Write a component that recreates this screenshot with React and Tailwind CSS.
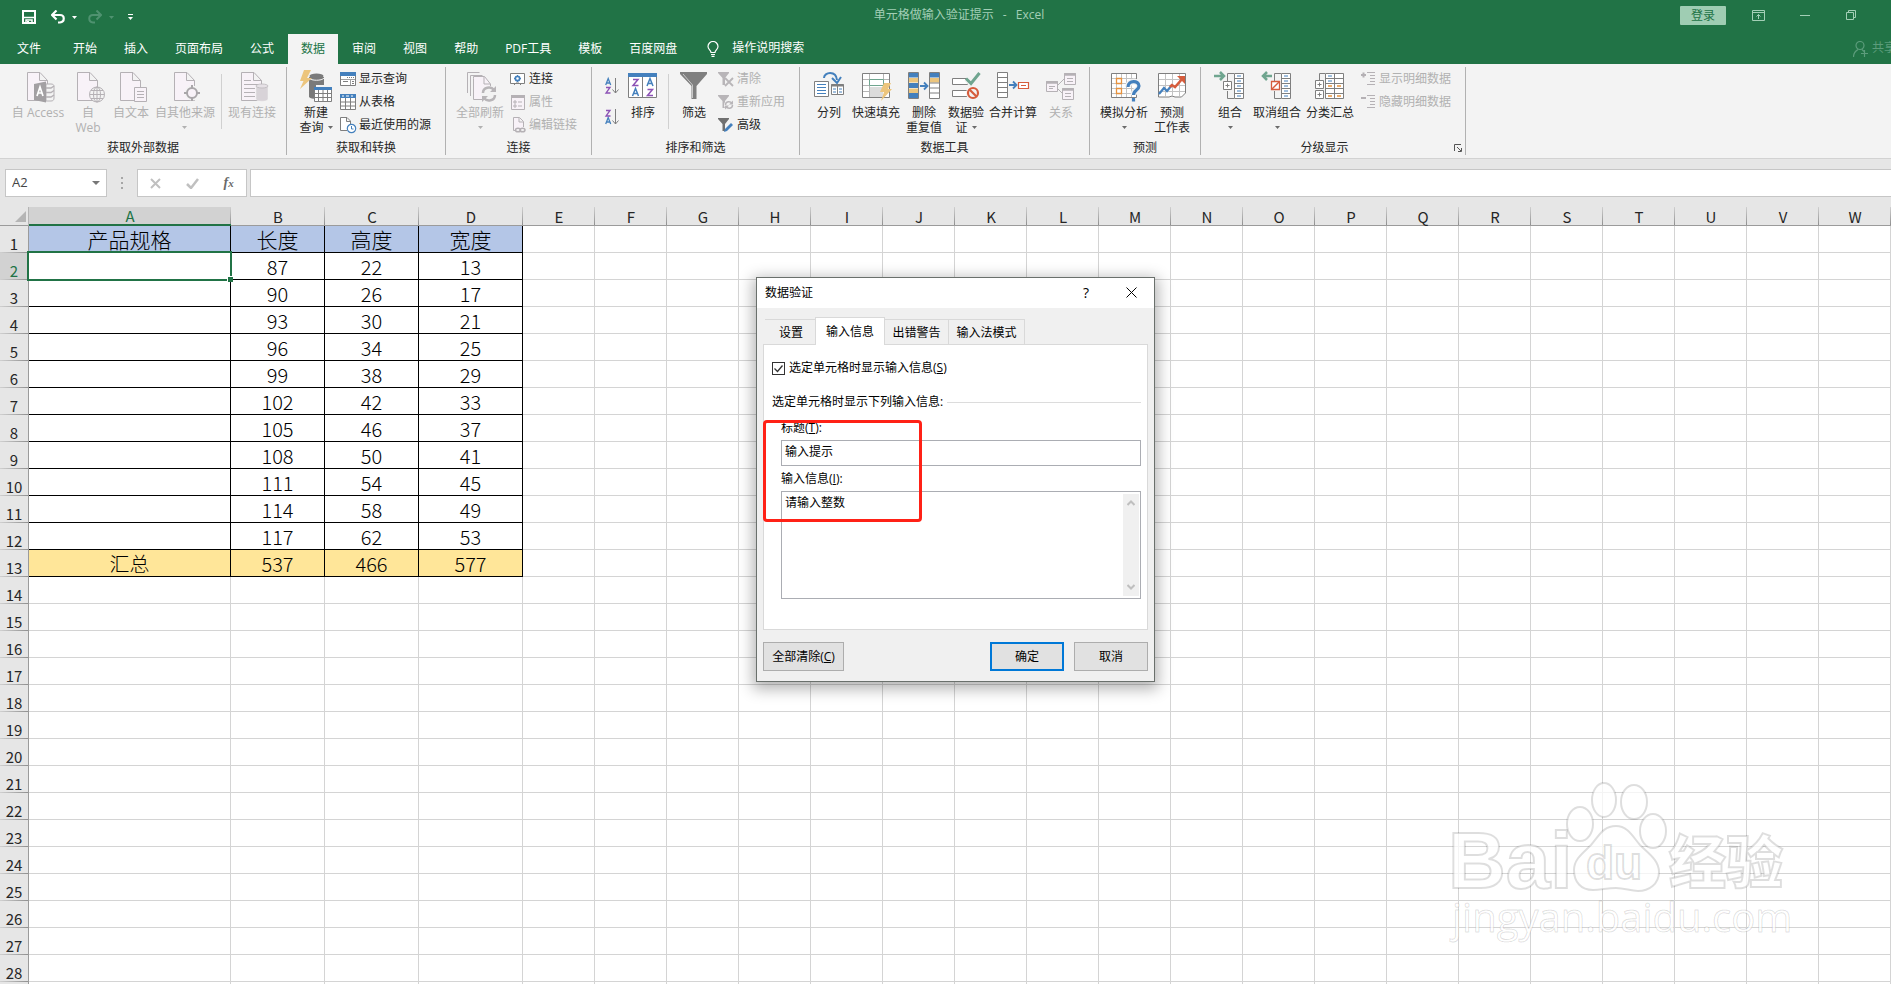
import React, { useState } from 'react';
import clsx from 'clsx';

const BLUE = '#4480bd';
const GRAY = '#7f7f7f';
const LIGHT = '#b5b1b5';
const PALE = '#f8f2f8';
const YELLOW = '#ecc57d';
const RED = '#d65c3c';
const GREEN = '#6fa58f';
const ORANGE = '#e8923c';
const PURPLE = '#8c52b5';

const COLUMNS = ['A', 'B', 'C', 'D', 'E', 'F', 'G', 'H', 'I', 'J', 'K', 'L', 'M', 'N', 'O', 'P', 'Q', 'R', 'S', 'T', 'U', 'V', 'W'];
const COLUMN_WIDTHS = { A: 202, B: 94, C: 94, D: 104 };

const ROWS = [
    ['产品规格', '长度', '高度', '宽度'],
    ['', 87, 22, 13],
    ['', 90, 26, 17],
    ['', 93, 30, 21],
    ['', 96, 34, 25],
    ['', 99, 38, 29],
    ['', 102, 42, 33],
    ['', 105, 46, 37],
    ['', 108, 50, 41],
    ['', 111, 54, 45],
    ['', 114, 58, 49],
    ['', 117, 62, 53],
    ['汇总', 537, 466, 577],
];
const ROW_COUNT = 29;

const MENU_TABS = ['开始', '插入', '页面布局', '公式', '数据', '审阅', '视图', '帮助', 'PDF工具', '模板', '百度网盘'];

// ---------- icons ----------

const Big = ({ children }) => (
    <svg className="h-8 w-8 shrink-0 overflow-visible" viewBox="0 0 32 32" fill="none">{children}</svg>
);

const Small = ({ children }) => (
    <svg className="h-4 w-4 shrink-0 overflow-visible" viewBox="0 0 16 16" fill="none">{children}</svg>
);

const Caret = ({ className }) => (
    <svg className={clsx('h-[3px] w-[5px]', className)} viewBox="0 0 5 3"><path d="M0 0h5L2.5 3z" fill="currentColor" /></svg>
);

const Page = () => (
    <path d="M5.5 1.5h12.500l7.500 8v20h-20zM17.500 1.500v8h8" stroke={LIGHT} fill={PALE} />
);

const AccessIcon = () => (
    <Big>
        <Page />
        <path d="M24 13h5c2 0 3 1 3 2v12c0 2-1 3-3 3h-5z" fill="#f3f3f3" stroke={LIGHT} />
        <path d="M24 17h5l3-2M24 21.500h5l3-2M24 26h5l3-2" stroke={LIGHT} strokeWidth="1.500" />
        <path d="M12 13l12-2.500v21L12 29z" fill="#a3a0a3" />
        <path d="M15 25l3-9 3 9M16 22h4" stroke="#fff" strokeWidth="1.700" />
    </Big>
);

const WebIcon = () => (
    <Big>
        <Page />
        <circle cx="25" cy="23.500" r="7.500" fill="#f3f3f3" stroke={LIGHT} />
        <ellipse cx="25" cy="23.500" rx="3.500" ry="7.500" stroke={LIGHT} />
        <path d="M25 16v15M17.500 23.500h15M19 19.500h12M19 27.500h12" stroke={LIGHT} />
    </Big>
);

const TextIcon = () => (
    <Big>
        <Page />
        <path d="M19.500 16.500h12v14h-12z" fill={PALE} stroke={LIGHT} />
        <path d="M22 20.500h7M22 23.500h7M22 26.500h7" stroke={LIGHT} />
    </Big>
);

const OtherSourceIcon = () => (
    <Big>
        <Page />
        <circle cx="23" cy="22" r="7.500" fill="#f3f3f3" />
        <circle cx="23" cy="22" r="5" stroke="#a9a6a9" strokeWidth="2" fill={PALE} />
        <path d="M23 14v4M23 26v4M15 22h4M27 22h4" stroke="#a9a6a9" strokeWidth="2" />
    </Big>
);

const ExistingIcon = () => (
    <Big>
        <Page />
        <path d="M8 9.500h7M8 13.500h14M8 17.500h11M8 21.500h11M8 25.500h11" stroke={LIGHT} />
        <path d="M20 15v13c0 3 12 3 12 0V15z" fill="#d8d3d8" stroke="#f3f3f3" strokeWidth=".5" />
        <ellipse cx="26" cy="15" rx="6" ry="2" fill="#e6e1e6" stroke={LIGHT} strokeWidth=".7" />
    </Big>
);

const NewQueryIcon = () => (
    <Big>
        <path d="M9 6v20c2 2 5 2 7 1V14h8V6z" fill="#7a7a7a" />
        <ellipse cx="16.500" cy="5" rx="7" ry="2.500" fill="#7a7a7a" />
        <path d="M9 7c2 3 13 3 15 0" stroke="#f3f3f3" />
        <path d="M4-1h7L7 7h5L0 18l3.500-8H0z" fill={YELLOW} />
        <path d="M14.500 16.500h17v14h-17z" fill="#fff" stroke={GRAY} />
        <path d="M14 16h18v3H14z" fill={BLUE} />
        <path d="M15 22.500h16M15 26.500h16M18.500 19v11M23 19v11M27.500 19v11" stroke={GRAY} />
    </Big>
);

const RefreshAllIcon = () => (
    <Big>
        <path d="M3.500 22V1.500h12M6.500 25V4.500h12" stroke={LIGHT} />
        <path d="M9.500 7.500V28.500h17V13l-6-7.500h-11z" stroke={LIGHT} fill={PALE} />
        <path d="M20 6v7h6" stroke={LIGHT} />
        <circle cx="25" cy="23" r="8" fill="#f3f3f3" />
        <path d="M19 22c0-6 8-7 11-3M31 24c0 6-8 7-11 3" stroke="#b8b5b8" strokeWidth="2.500" />
        <path d="M32 15v6h-6zM18 31v-6h6z" fill="#b8b5b8" />
    </Big>
);

const SortIcon = () => (
    <Big>
        <path d="M1.500 2.500h28v24h-28z" fill="#fff" stroke={GRAY} />
        <path d="M1 2h29v4H1z" fill={BLUE} />
        <path d="M15.500 6v20" stroke={GRAY} />
        <path d="M6 8.500h5l-5 6h5.500M20.500 18.500h5l-5 6H26" stroke={PURPLE} strokeWidth="1.500" />
        <path d="M5.500 25l3-7.500 3 7.500M6.500 22.500h4M20 15l3-7.500L26 15M21 12.500h4" stroke={BLUE} strokeWidth="1.500" />
    </Big>
);

const FilterIcon = () => (
    <Big>
        <path d="M2 1h27v2L18.500 15v13h-5V15L2 3z" fill={GRAY} />
        <path d="M5 3l9.500 11v13" stroke="#c9c9c9" />
    </Big>
);

const SplitIcon = () => (
    <Big>
        <path d="M11 7c0-6 12-8 13 2" stroke={BLUE} strokeWidth="2" />
        <path d="M19 7l5 5 4-6" stroke={BLUE} strokeWidth="2" />
        <path d="M1.500 10.500h14v15h-14z" fill="#fff" stroke={GRAY} />
        <path d="M4 13.500h9M4 16.500h9M4 19.500h9M4 22.500h9" stroke={BLUE} />
        <path d="M18.500 13.500h12v10h-12z" fill="#fff" stroke={GRAY} />
        <path d="M18 14.500h13" stroke={GRAY} strokeWidth="2" />
        <path d="M24.500 14v10" stroke={GRAY} />
        <path d="M20 18h3M20 21h3M26 18h3M26 21h3" stroke={BLUE} />
    </Big>
);

const FlashFillIcon = () => (
    <Big>
        <path d="M2.500 2.500h27v24h-27z" fill="#fff" stroke={GRAY} />
        <path d="M9 16h14v10H9z" fill="#dcdcdc" />
        <path d="M3 8.500h26M3 14.500h26M3 20.500h6M9.500 3v23M23.500 3v5" stroke="#b5b5b5" />
        <path d="M9.500 8.500h14v6h-14z" fill="#fff" stroke={GREEN} />
        <path d="M24 12h7l-3 6h4L21 30l3-9h-4z" fill={YELLOW} />
    </Big>
);

const RemoveDupIcon = () => (
    <Big>
        <path d="M.5 1.500h10v26H.5zM21.500 1.500h10v26h-10z" fill="#fff" stroke={GRAY} />
        <path d="M1 2h9v4.500H1zM1 12h9v5H1zM1 22h9v5H1zM22 2h9v4.500h-9z" fill={BLUE} />
        <path d="M1 7h9v4.500H1zM1 17.500h9V22H1zM22 7h9v4.500h-9z" fill={YELLOW} />
        <path d="M22 12h9M22 17h9M22 22h9" stroke={GRAY} />
        <path d="M12 15h7M16 11.500l3.500 3.500-3.500 3.500" stroke={BLUE} strokeWidth="1.800" />
    </Big>
);

const ValidationIcon = () => (
    <Big>
        <path d="M2.500 7.500h15v6h-15zM2.500 19.500h15v6h-15z" fill="#fff" stroke={GRAY} />
        <path d="M16 8l5 5 8-11" stroke="#f3f3f3" strokeWidth="5" />
        <path d="M16 7.500l5 5 8.500-10.500" stroke={GREEN} strokeWidth="3" />
        <circle cx="23" cy="22" r="7" fill="#f3f3f3" />
        <circle cx="23" cy="22" r="5" stroke={RED} strokeWidth="2.200" />
        <path d="M19.500 18.500l7 7" stroke={RED} strokeWidth="2.200" />
    </Big>
);

const ConsolidateIcon = () => (
    <Big>
        <path d="M.5 1.500h10v25H.5z" fill="#fff" stroke={GRAY} />
        <path d="M1 6.500h9M1 11.500h9M1 16.500h9M1 21.500h9" stroke={GRAY} />
        <path d="M12 14h7M16 10.500l3.500 3.500-3.500 3.500" stroke={BLUE} strokeWidth="1.800" />
        <path d="M21.500 11.500h10v6h-10z" fill="#fff" stroke={RED} strokeWidth="1.200" />
        <path d="M24 14.500h5" stroke={RED} />
    </Big>
);

const RelationIcon = () => (
    <Big>
        <path d="M12 15l9-9M12 17l6 6" stroke={LIGHT} />
        <path d="M1.500 10.500h11v10h-11zM19.500 2.500h11v11h-11zM17.500 17.500h11v11h-11z" fill={PALE} stroke={LIGHT} />
        <path d="M1 11.500h12M19 3.500h12M17 18.500h12" stroke={LIGHT} strokeWidth="2.500" />
        <path d="M4 15.500h6M4 17.500h4M22 7.500h6M22 10.500h6M20 22.500h6M20 25.500h6" stroke={LIGHT} />
    </Big>
);

const WhatIfIcon = () => (
    <Big>
        <path d="M3.500 2.500h25v24h-25z" fill="#fff" stroke={GRAY} />
        <path d="M8.500 3v23M13.500 3v23M18.500 3v23M23.500 3v23M4 7.500h24M4 12.500h24M4 17.500h24M4 22.500h24" stroke="#c3c3c3" />
        <path d="M8.500 7.500h5v5h-5zM8.500 17.500h5v5h-5z" stroke={ORANGE} strokeWidth="1.300" fill="#fff" />
        <path d="M20 16c0-7 11-7 11-1 0 4-5.500 4-5.500 9" stroke="#f3f3f3" strokeWidth="6" />
        <path d="M20 16c0-7 11-7 11-1 0 4-5.500 4-5.500 9M25.500 27v3.500" stroke={BLUE} strokeWidth="3.200" />
    </Big>
);

const ForecastIcon = () => (
    <Big>
        <path d="M2.500 2.500h27v19.500l-4 4H19l-3-1-3 1H2.500z" fill="#fff" stroke={GRAY} />
        <path d="M9.500 3v22M16.500 3v22M23.500 3v22M3 8.500h26M3 14.500h26M3 20.500h26" stroke="#c3c3c3" />
        <path d="M3 23l5-6 3 3 5-6" stroke={BLUE} strokeWidth="2.200" />
        <path d="M14 16l2-2 3 2 8-9" stroke={RED} strokeWidth="2.500" />
        <path d="M21 5h8v8z" fill={RED} />
    </Big>
);

const OutlineRows = () => (
    <>
        <path d="M20.500 2.500h9v25h-9z" fill="#fff" stroke={GRAY} />
        <path d="M21 7.500h8M21 12.500h8M21 17.500h8M21 22.500h8" stroke={GRAY} />
        <path d="M23 5h4M23 10h4M23 15h4M23 20h4M23 25h4" stroke={BLUE} />
        <path d="M20 2.500h-6.500V10M20 27.500h-6.500V20" stroke={GRAY} />
    </>
);

const GroupIcon = () => (
    <Big>
        <OutlineRows />
        <path d="M9.500 10.500h8v8h-8z" fill="#fff" stroke={GRAY} />
        <path d="M11.500 14.500h4M13.500 12.500v4" stroke={GRAY} />
        <path d="M0 5h9M6 1l4 4-4 4" stroke={GREEN} strokeWidth="2.500" />
    </Big>
);

const UngroupIcon = () => (
    <Big>
        <OutlineRows />
        <path d="M10.500 10.500h8v8h-8z" fill="#fff" stroke={RED} strokeWidth="1.300" />
        <path d="M11 18l7-7" stroke={RED} strokeWidth="1.500" />
        <path d="M2 5h9M6 1L2 5l4 4" stroke={GREEN} strokeWidth="2.500" />
    </Big>
);

const SubtotalIcon = () => (
    <Big>
        <path d="M11.500 2.500h18v25h-18z" fill="#fff" stroke={GRAY} />
        <path d="M12 7.500h17M12 12.500h17M12 17.500h17M12 22.500h17M20.500 3v24" stroke={GRAY} />
        <path d="M14 5h4M14 10h4" stroke={BLUE} />
        <path d="M14 15h4M23 15h4M14 25h4M23 25h4" stroke={ORANGE} strokeWidth="1.500" />
        <path d="M11 2.500H5.500V9" stroke={GRAY} />
        <path d="M1.500 9.500h8v8h-8zM1.500 19.500h8v8h-8z" fill="#fff" stroke={GRAY} />
        <path d="M3.500 13.500h4M5.500 11.500v4M3.500 23.500h4M5.500 21.500v4" stroke={GRAY} />
    </Big>
);

const ShowQueryIcon = () => (
    <Small>
        <path d="M.5 1.500h15v13H.5z" fill="#fff" stroke={GRAY} />
        <path d="M0 1h16v4H0z" fill={BLUE} />
        <path d="M1 8.500h14M10.500 9v5" stroke="#a0a0a0" />
        <path d="M7 6.500h1M9 6.500h1M11 6.500h1M13 6.500h1M3 10.500h5M12 10.500h2M12 12.500h2" stroke={GRAY} />
    </Small>
);

const FromTableIcon = () => (
    <Small>
        <path d="M.5.5h15v15H.5z" fill="#fff" stroke={GRAY} />
        <path d="M0 0h16v4H0z" fill={BLUE} />
        <path d="M2 2h2M6 2h3M11 2h2" stroke="#fff" />
        <path d="M1 8h14M1 12h14M5.500 4v11M10.500 4v11" stroke={GRAY} />
    </Small>
);

const RecentIcon = () => (
    <Small>
        <path d="M7 13.500H.5V.500H7L10.500 4v3M6.500.5V4.500h4" stroke={GRAY} fill="#fff" />
        <circle cx="11.500" cy="11.500" r="4.200" fill="#fff" stroke={BLUE} strokeWidth="1.200" />
        <path d="M11.500 9v3h2" stroke={BLUE} />
    </Small>
);

const ConnectIcon = () => (
    <Small>
        <path d="M.5 2.500h14v10H.5z" fill="#fff" stroke={GRAY} />
        <path d="M4 14l2-2h3l2 2" stroke={GRAY} />
        <circle cx="7.500" cy="7.500" r="2.200" stroke={BLUE} strokeWidth="1.800" />
        <path d="M7.500 4v1M7.500 10v1M4 7.500h1M10 7.500h1" stroke={BLUE} />
    </Small>
);

const PropertyIcon = () => (
    <Small>
        <path d="M1.500 1.500h13v14h-13z" fill={PALE} stroke={LIGHT} />
        <path d="M1 2.500h14" stroke={LIGHT} strokeWidth="3" />
        <path d="M4 7h2v2H4zM4 11h2v2H4z" stroke={LIGHT} />
        <path d="M8 8h4M8 12h4" stroke={LIGHT} />
    </Small>
);

const EditLinkIcon = () => (
    <Small>
        <path d="M6 13.500H3.500V.500h6l4 4V10M9 1v4h4" stroke={LIGHT} fill={PALE} />
        <ellipse cx="8" cy="13" rx="2.500" ry="1.800" stroke={LIGHT} strokeWidth="1.500" />
        <ellipse cx="12.500" cy="13" rx="2.500" ry="1.800" stroke={LIGHT} strokeWidth="1.500" />
    </Small>
);

const Funnel = ({ color }) => <path d="M0 1h11v1L7 7v7H4.500V7L0 2z" fill={color} />;

const ClearIcon = () => (
    <Small><Funnel color="#b8b5b8" /><path d="M7 7l8 8M15 7l-8 8" stroke="#b8b5b8" strokeWidth="1.800" /></Small>
);

const ReapplyIcon = () => (
    <Small>
        <Funnel color="#b8b5b8" />
        <circle cx="11" cy="11" r="5" fill="#f3f3f3" />
        <path d="M7.500 11c0-4 5-4 6.500-1.500M14.500 11c0 4-5 4-6.500 1.500" stroke="#b8b5b8" strokeWidth="1.500" />
        <path d="M15 6.500V10.500h-4zM7 15.500v-4h4z" fill="#b8b5b8" />
    </Small>
);

const AdvancedIcon = () => (
    <Small><Funnel color="#707070" /><path d="M6 15l1-3 6-6 2 2-6 6z" fill={BLUE} /></Small>
);

const DetailIcon = ({ plus }) => (
    <Small>
        <path d={plus ? 'M1 4h5M3.500 1.500v5' : 'M1 4h5'} stroke={LIGHT} strokeWidth="2" />
        <path d="M7 1.500h8M10 4.500h5M10 7.500h5M10 10.500h5M7 13.500h8" stroke={LIGHT} />
    </Small>
);

const SortOrder = ({ desc }) => (
    <svg className="h-4 w-4 overflow-visible" viewBox="0 0 16 16" fill="none">
        <g transform={desc ? 'translate(0 8)' : ''}>
            <path d="M.7 7l2.500-6.500L5.700 7M1.500 5h3.500" stroke={BLUE} strokeWidth="1.300" />
        </g>
        <g transform={desc ? 'translate(0 -8)' : ''}>
            <path d="M1 9.500h4l-4 5.500h4.500" stroke={PURPLE} strokeWidth="1.300" />
        </g>
        <path d="M10.500 0v15M7.500 11.500l3 3.500 3-3.500" stroke={GRAY} />
    </svg>
);

// ---------- title bar and menu ----------

const TitleBar = () => (
    <header className="flex h-[34px] shrink-0 items-start overflow-hidden text-[#a3cfb6]">
        <div className="flex h-[34px] flex-1 items-center pl-[22px] text-white">
            <button aria-label="保存">
                <svg className="h-[14px] w-[14px]" viewBox="0 0 14 14" fill="none">
                    <path d="M1 1h12v12H1z" stroke="currentColor" strokeWidth="2" />
                    <path d="M2 7.500h10M4 13V10h6v3" stroke="currentColor" strokeWidth="1.500" />
                    <path d="M5 11h2v3H5z" fill="currentColor" />
                </svg>
            </button>
            <button aria-label="撤消" className="ml-[15px] flex items-center gap-[7px]">
                <svg className="h-[14px] w-[14px]" viewBox="0 0 14 14" fill="none">
                    <path d="M1 5h8c5 0 5 7 0 7.500H7M5.500.5L1 5l4.500 4.500" stroke="currentColor" strokeWidth="2.200" />
                </svg>
                <Caret />
            </button>
            <button aria-label="恢复" className="ml-[11px] flex items-center gap-[7px] text-[#4f9270]">
                <svg className="h-[14px] w-[14px]" viewBox="0 0 14 14" fill="none">
                    <path d="M13 5H5C0 5 0 12 5 12.500h2M8.500.5L13 5 8.500 9.500" stroke="currentColor" strokeWidth="2" />
                </svg>
                <Caret />
            </button>
            <button aria-label="自定义快速访问工具栏" className="ml-[14px] flex flex-col items-center gap-[2px]">
                <span className="h-px w-[5px] bg-white" />
                <Caret />
            </button>
        </div>
        <h1 className="ml-10 flex gap-[9px] text-xs leading-[30px]">
            <span>单元格做输入验证提示</span><span>-</span><span>Excel</span>
        </h1>
        <div className="flex h-[30px] flex-1 items-center justify-end pr-[35px]">
            <button className="h-[19px] w-[46px] rounded-[1px] bg-[#9fcdb3] text-xs leading-[19px] text-[#217346]">登录</button>
            <button aria-label="功能区显示选项" className="ml-[26px]">
                <svg className="h-[11px] w-[13px]" viewBox="0 0 13 11" fill="none" stroke="currentColor">
                    <path d="M.5.5h12v10H.5zM1 2.500h11M6.500 9V4.500M4.500 6.500l2-2 2 2" />
                </svg>
            </button>
            <button aria-label="最小化" className="ml-[35px]"><span className="block h-px w-[10px] bg-[#a3cfb6]" /></button>
            <button aria-label="还原" className="ml-9">
                <svg className="h-[10px] w-[10px]" viewBox="0 0 10 10" fill="none" stroke="currentColor">
                    <path d="M.5 2.500h7v7h-7zM2.500 2V.500h7v7H8" />
                </svg>
            </button>
        </div>
    </header>
);

const MenuBar = ({ active, onSelect }) => (
    <nav className="flex h-[30px] shrink-0 gap-px overflow-hidden text-xs leading-[28px] whitespace-nowrap text-white">
        <button className="pr-[18px] pl-[17px]">文件</button>
        {MENU_TABS.map((tab) => (
            <button
                key={tab}
                onClick={() => onSelect(tab)}
                className={clsx('px-[13px]', tab === active && 'bg-[#f3f3f3] text-[#217346]')}
            >
                {tab}
            </button>
        ))}
        <button className="ml-4 flex gap-[13px]">
            <svg className="mt-[7px] h-4 w-3" viewBox="0 0 12 16" fill="none" stroke="currentColor" strokeWidth="1.200">
                <path d="M4 11.500C4 9 1 8.500 1 5.500a5 5 0 0 1 10 0C11 8.500 8 9 8 11.500zM4 13.500h4M4.500 15.400h3" />
            </svg>
            操作说明搜索
        </button>
        <button className="ml-auto flex w-[38px] shrink-0 gap-1 text-[#5c9c7b]">
            <svg className="mt-[7px] h-4 w-[15px] shrink-0" viewBox="0 0 15 16" fill="none" stroke="currentColor" strokeWidth="1.200">
                <circle cx="7" cy="4.500" r="4" />
                <path d="M.5 16c0-4 2-6 4.500-7.500M9 8.500l2 2M11.500 9v7M8 12.500h7" />
            </svg>
            共享
        </button>
    </nav>
);

// ---------- ribbon ----------

const RibbonGroup = ({ label, className, launcher, children }) => (
    <section className="flex shrink-0 flex-col border-r border-[#b1b1b1]">
        <div className={clsx('flex flex-1', className)}>{children}</div>
        <div className="flex h-[15px] leading-[15px]">
            <span className="flex-1 text-center">{label}</span>
            {launcher && (
                <button aria-label={`${label}设置`} className="flex w-[17px] items-center pl-[6px]">
                    <svg className="h-2 w-2" viewBox="0 0 8 8" fill="none" stroke="#555">
                        <path d="M.5 7V.500H7M3 3l4 4M7.500 4v3.500H4" />
                    </svg>
                </button>
            )}
        </div>
    </section>
);

const BigButton = ({ icon, lines, caret, disabled, className }) => (
    <button
        disabled={disabled}
        className={clsx('flex flex-col items-center gap-[2px] pt-1 leading-[15px] whitespace-nowrap', disabled && 'text-[#b1b1b1]', className)}
    >
        {icon}
        <span className="block">
            {lines[0]}
            <span className="flex h-[15px] items-center justify-center gap-1">
                {lines[1]}
                {caret && <Caret className={disabled ? 'text-[#b1b1b1]' : 'text-[#6a6a6a]'} />}
            </span>
        </span>
    </button>
);

const SmallButton = ({ icon, label, disabled }) => (
    <button disabled={disabled} className={clsx('flex h-[23px] items-center gap-[3px] whitespace-nowrap', disabled && 'text-[#b1b1b1]')}>
        {icon}
        {label}
    </button>
);

const Divider = ({ className }) => <span className={clsx('mt-[7px] h-[55px] w-px bg-[#d0d0d0]', className)} />;

const Ribbon = () => (
    <div className="flex h-[95px] shrink-0 overflow-hidden border-b border-[#d2d2d2] bg-[#f3f3f3] pt-[3px] pb-[3px] text-xs text-[#262626]">
        <RibbonGroup label="获取外部数据" className="pr-2 pl-2">
            <BigButton icon={<AccessIcon />} lines={['自 Access']} disabled className="w-[60px]" />
            <BigButton icon={<WebIcon />} lines={['自', 'Web']} disabled className="w-10" />
            <BigButton icon={<TextIcon />} lines={['自文本']} disabled className="w-[46px]" />
            <BigButton icon={<OtherSourceIcon />} lines={['自其他来源']} caret disabled className="w-[62px]" />
            <Divider className="mr-1 ml-[5px]" />
            <BigButton icon={<ExistingIcon />} lines={['现有连接']} disabled className="w-[52px]" />
        </RibbonGroup>
        <RibbonGroup label="获取和转换" className="pr-[14px] pl-2">
            <BigButton icon={<NewQueryIcon />} lines={['新建', '查询']} caret className="w-[42px]" />
            <div className="ml-[3px]">
                <SmallButton icon={<ShowQueryIcon />} label="显示查询" />
                <SmallButton icon={<FromTableIcon />} label="从表格" />
                <SmallButton icon={<RecentIcon />} label="最近使用的源" />
            </div>
        </RibbonGroup>
        <RibbonGroup label="连接" className="pr-[14px] pl-2">
            <BigButton icon={<RefreshAllIcon />} lines={['全部刷新']} caret disabled className="w-[52px]" />
            <div className="ml-1">
                <SmallButton icon={<ConnectIcon />} label="连接" />
                <SmallButton icon={<PropertyIcon />} label="属性" disabled />
                <SmallButton icon={<EditLinkIcon />} label="编辑链接" disabled />
            </div>
        </RibbonGroup>
        <RibbonGroup label="排序和筛选" className="pr-[14px] pl-[13px]">
            <div className="flex flex-col gap-[15px] pt-[11px]">
                <button aria-label="升序"><SortOrder /></button>
                <button aria-label="降序"><SortOrder desc /></button>
            </div>
            <BigButton icon={<SortIcon />} lines={['排序']} className="w-[44px]" />
            <Divider className="mr-1 ml-[3px]" />
            <BigButton icon={<FilterIcon />} lines={['筛选']} className="w-[42px]" />
            <div className="ml-[3px]">
                <SmallButton icon={<ClearIcon />} label="清除" disabled />
                <SmallButton icon={<ReapplyIcon />} label="重新应用" disabled />
                <SmallButton icon={<AdvancedIcon />} label="高级" />
            </div>
        </RibbonGroup>
        <RibbonGroup label="数据工具" className="pr-[7px] pl-2">
            <BigButton icon={<SplitIcon />} lines={['分列']} className="w-[42px]" />
            <BigButton icon={<FlashFillIcon />} lines={['快速填充']} className="w-[52px]" />
            <BigButton icon={<RemoveDupIcon />} lines={['删除', '重复值']} className="w-[44px]" />
            <BigButton icon={<ValidationIcon />} lines={['数据验', '证']} caret className="w-10" />
            <BigButton icon={<ConsolidateIcon />} lines={['合并计算']} className="w-[54px]" />
            <BigButton icon={<RelationIcon />} lines={['关系']} disabled className="w-[42px]" />
        </RibbonGroup>
        <RibbonGroup label="预测" className="pr-[6px] pl-2">
            <BigButton icon={<WhatIfIcon />} lines={['模拟分析']} caret className="w-[52px]" />
            <BigButton icon={<ForecastIcon />} lines={['预测', '工作表']} className="w-[44px]" />
        </RibbonGroup>
        <RibbonGroup label="分级显示" launcher className="pr-[14px] pl-2">
            <BigButton icon={<GroupIcon />} lines={['组合']} caret className="w-[42px]" />
            <BigButton icon={<UngroupIcon />} lines={['取消组合']} caret className="w-[52px]" />
            <BigButton icon={<SubtotalIcon />} lines={['分类汇总']} className="w-[54px]" />
            <div className="ml-[3px]">
                <SmallButton icon={<DetailIcon plus />} label="显示明细数据" disabled />
                <SmallButton icon={<DetailIcon />} label="隐藏明细数据" disabled />
            </div>
        </RibbonGroup>
    </div>
);

const FormulaBar = () => (
    <div className="flex h-12 shrink-0 pt-[10px] text-[13px] text-[#444]">
        <div className="ml-[5px] flex h-7 w-[102px] items-center border border-[#c6c6c6] bg-white">
            <input aria-label="名称框" defaultValue="A2" className="w-full min-w-0 flex-1 pl-[6px] outline-none" />
            <button aria-label="选择名称" className="pr-[6px]">
                <svg className="h-1 w-2" viewBox="0 0 8 4"><path d="M0 0h8L4 4z" fill="#777" /></svg>
            </button>
        </div>
        <div className="flex h-7 w-[30px] flex-col items-center justify-center gap-[3px]">
            <span className="h-[2px] w-[2px] bg-[#a6a6a6]" />
            <span className="h-[2px] w-[2px] bg-[#a6a6a6]" />
            <span className="h-[2px] w-[2px] bg-[#a6a6a6]" />
        </div>
        <div className="flex h-7 w-[110px] items-center justify-around border border-[#c6c6c6] bg-white">
            <button aria-label="取消" disabled>
                <svg className="h-[11px] w-[11px]" viewBox="0 0 11 11"><path d="M1 1l9 9M10 1l-9 9" stroke="#c0c0c0" strokeWidth="2" /></svg>
            </button>
            <button aria-label="输入" disabled>
                <svg className="h-[11px] w-[13px]" viewBox="0 0 13 11"><path d="M1 6l4 4 7-9" fill="none" stroke="#c0c0c0" strokeWidth="2.500" /></svg>
            </button>
            <button aria-label="插入函数" className="font-['Liberation_Serif',serif] text-sm leading-none font-bold text-[#6a6a6a] italic">
                f<span className="text-[11px]">x</span>
            </button>
        </div>
        <input aria-label="编辑栏" className="ml-[3px] h-7 min-w-0 flex-1 border border-r-0 border-[#c6c6c6] bg-white px-2 outline-none" />
    </div>
);

// ---------- sheet ----------

const Sheet = () => (
    <table className="w-max table-fixed border-separate border-spacing-0 bg-white font-['Noto_Sans_CJK_SC',sans-serif]">
        <colgroup>
            <col className="w-[29px]" />
            {COLUMNS.map((c) => <col key={c} style={{ width: COLUMN_WIDTHS[c] || 72 }} />)}
        </colgroup>
        <thead>
            <tr className="h-[19px] text-[15px] leading-[17px] text-[#262626]">
                <th className="border-r border-b border-r-[#b5b5b5] border-b-[#9b9b9b] bg-[#e6e6e6] p-0">
                    <svg className="mt-px ml-auto mr-[2px] h-[11px] w-[11px]" viewBox="0 0 11 11"><path d="M11 0v11H0z" fill="#b5b5b5" /></svg>
                </th>
                {COLUMNS.map((c) => (
                    <th
                        key={c}
                        className={clsx(
                            'bg-[linear-gradient(to_bottom,#d0d0d0,#909090)] bg-[length:1px_100%] bg-right bg-no-repeat p-0 pt-px font-normal',
                            c === 'A'
                                ? 'border-b-2 border-[#217346] bg-[#d2d2d2] leading-4 text-[#217346]'
                                : 'border-b border-[#9b9b9b] bg-[#e6e6e6]'
                        )}
                    >
                        {c}
                    </th>
                ))}
            </tr>
        </thead>
        <tbody>
            {Array.from({ length: ROW_COUNT }, (_, r) => (
                <tr key={r} className="h-[27px]">
                    <th
                        className={clsx(
                            'border-r border-[#9b9b9b] bg-[linear-gradient(to_right,#d0d0d0,#909090)] bg-[length:100%_1px] bg-bottom bg-no-repeat p-0 pb-px align-bottom text-[15px] leading-[17px] font-normal',
                            r === 1 ? 'bg-[#d2d2d2] text-[#217346]' : 'bg-[#e6e6e6] text-[#262626]'
                        )}
                    >
                        {r + 1}
                    </th>
                    {COLUMNS.map((c, i) => {
                        const filled = r < ROWS.length && i < 4;
                        const selected = r === 1 && i === 0;
                        return (
                            <td
                                key={c}
                                className={clsx(
                                    'border-r border-b p-0 text-center font-light',
                                    filled ? 'border-black text-black' : 'border-[#d4d4d4]',
                                    r === 0 ? 'text-[21px] leading-[26px]' : 'pt-[2px] text-xl leading-6',
                                    filled && r === 0 && 'bg-[#b4c6e7]',
                                    filled && r === 12 && 'bg-[#ffe699]',
                                    selected && 'relative'
                                )}
                            >
                                {filled && ROWS[r][i]}
                                {selected && (
                                    <span className="absolute -inset-[2px] border-2 border-[#217346]">
                                        <span className="absolute -right-[3px] -bottom-[3px] h-[6px] w-[6px] border-t border-l border-white bg-[#217346]" />
                                    </span>
                                )}
                            </td>
                        );
                    })}
                </tr>
            ))}
        </tbody>
    </table>
);

// ---------- data validation dialog ----------

const ValidationDialog = () => {
    const [show, setShow] = useState(true);
    const [title, setTitle] = useState('输入提示');
    const [message, setMessage] = useState('请输入整数');

    return (
        <div
            role="dialog"
            aria-label="数据验证"
            className="absolute top-[277px] left-[756px] w-[399px] border border-[#6a706c] bg-[#f0f0f0] text-xs text-black shadow-[0_4px_14px_3px_rgba(0,0,0,0.3)]"
        >
            <div className="flex h-[30px] items-center bg-white pl-2">
                <span className="flex-1">数据验证</span>
                <button aria-label="帮助" className="w-[46px] text-center text-sm">?</button>
                <button aria-label="关闭" className="flex w-[45px] justify-center pb-px">
                    <svg className="h-[11px] w-[11px]" viewBox="0 0 11 11"><path d="M.5.5l10 10M10.500.5l-10 10" stroke="#000" /></svg>
                </button>
            </div>
            <div className="px-[6px] pt-[9px] pb-[10px]">
                <div role="tablist" className="flex items-end pl-[2px]">
                    <button role="tab" className="h-[25px] w-[50px] border-t border-[#d9d9d9] pt-px pl-[2px]">设置</button>
                    <button role="tab" aria-selected="true" className="z-10 -mb-px h-7 w-[70px] border border-b-0 border-[#d9d9d9] bg-white">输入信息</button>
                    <button role="tab" className="h-[25px] w-16 border-t border-r border-[#d9d9d9] pt-px">出错警告</button>
                    <button role="tab" className="h-[25px] w-[76px] border-t border-r border-[#d9d9d9] pt-px">输入法模式</button>
                </div>
                <div className="h-[286px] border border-[#d9d9d9] bg-white pt-4 pr-[6px] pl-2">
                    <label className="flex h-[14px] items-center gap-1 leading-[14px]">
                        <span className="relative h-[13px] w-[13px]">
                            <input
                                type="checkbox"
                                checked={show}
                                onChange={(e) => setShow(e.target.checked)}
                                className="block h-[13px] w-[13px] appearance-none border border-[#333] bg-white"
                            />
                            {show && (
                                <svg className="pointer-events-none absolute inset-0 h-[13px] w-[13px]" viewBox="0 0 13 13" fill="none">
                                    <path d="M2.500 6.500l3 3 5-6" stroke="#333" strokeWidth="1.300" />
                                </svg>
                            )}
                        </span>
                        <span>选定单元格时显示输入信息(<u>S</u>)</span>
                    </label>
                    <div className="mt-[19px] flex items-center gap-1 leading-4">
                        选定单元格时显示下列输入信息:
                        <span className="h-px flex-1 bg-[#dcdcdc]" />
                    </div>
                    <div className="pt-[10px] pl-[9px] leading-4">
                        <label htmlFor="dv-title" className="block">标题(<u>T</u>):</label>
                        <input
                            id="dv-title"
                            value={title}
                            onChange={(e) => setTitle(e.target.value)}
                            className="mt-1 block h-[26px] w-full border border-[#abadb3] px-[3px] pb-1 outline-none"
                        />
                        <label htmlFor="dv-message" className="mt-[5px] block">输入信息(<u>I</u>):</label>
                        <div className="mt-1 flex h-[108px] border border-[#abadb3] p-[1px]">
                            <textarea
                                id="dv-message"
                                value={message}
                                onChange={(e) => setMessage(e.target.value)}
                                className="min-w-0 flex-1 resize-none px-[2px] pt-[2px] outline-none"
                            />
                            <div className="my-px flex w-4 flex-col items-center justify-between bg-[#f0f0f0] py-[6px]">
                                <svg className="h-[6px] w-2" viewBox="0 0 8 6" fill="none"><path d="M.5 5L4 1.500 7.500 5" stroke="#bfbfbf" strokeWidth="2" /></svg>
                                <svg className="h-[6px] w-2" viewBox="0 0 8 6" fill="none"><path d="M.5 1L4 4.500 7.500 1" stroke="#bfbfbf" strokeWidth="2" /></svg>
                            </div>
                        </div>
                    </div>
                </div>
                <div className="mt-3 flex gap-[10px]">
                    <button className="mr-auto h-[29px] w-[81px] border border-[#adadad] bg-[#e1e1e1]">全部清除(<u>C</u>)</button>
                    <button className="h-[29px] w-[74px] border-2 border-[#0078d7] bg-[#e1e1e1]">确定</button>
                    <button className="h-[29px] w-[74px] border border-[#adadad] bg-[#e1e1e1]">取消</button>
                </div>
            </div>
            {/* highlight around the title and message fields */}
            <div className="pointer-events-none absolute top-[142px] left-[6px] z-20 h-[102px] w-[159px] rounded-[4px] border-3 border-[#ff2116]" />
        </div>
    );
};

const Watermark = () => (
    <svg
        className="pointer-events-none absolute top-[760px] left-[1420px] h-[224px] w-[400px]"
        viewBox="0 0 400 224"
        fill="#fff"
        fillOpacity=".75"
        stroke="#000"
        strokeOpacity=".13"
        strokeWidth="2"
    >
        <text x="28" y="128" fontFamily="Liberation Sans, sans-serif" fontWeight="700" fontSize="80">Bai</text>
        <ellipse cx="160" cy="64" rx="13" ry="17" />
        <ellipse cx="184" cy="40" rx="12" ry="17" />
        <ellipse cx="214" cy="42" rx="13" ry="17" />
        <ellipse cx="233" cy="71" rx="13" ry="17" />
        <path d="M196 66c12 0 17 11 24 19 8 8 19 15 19 27 0 12-10 19-21 19-8 0-13-3-22-3s-15 2-23 2c-12 0-19-8-19-20 0-11 9-17 17-25 8-9 12-19 25-19z" />
        <text x="166" y="119" fontFamily="Liberation Sans, sans-serif" fontWeight="700" fontSize="46">du</text>
        <text x="249" y="123" fontFamily="Noto Sans CJK SC, sans-serif" fontWeight="900" fontSize="57">经验</text>
        <text x="32" y="172" fontFamily="Open Sans, sans-serif" fontWeight="500" fontSize="40" strokeWidth="1">jingyan.baidu.com</text>
    </svg>
);

export default function App() {
    const [tab, setTab] = useState('数据');

    return (
        <div className="relative flex h-screen flex-col overflow-hidden bg-[#e6e6e6] font-['Open_Sans','Noto_Sans_CJK_SC',sans-serif]">
            <div className="bg-[#217346]">
                <TitleBar />
                <MenuBar active={tab} onSelect={setTab} />
            </div>
            <Ribbon />
            <FormulaBar />
            <main className="min-h-0 flex-1">
                <Sheet />
            </main>
            <ValidationDialog />
            <Watermark />
        </div>
    );
}
